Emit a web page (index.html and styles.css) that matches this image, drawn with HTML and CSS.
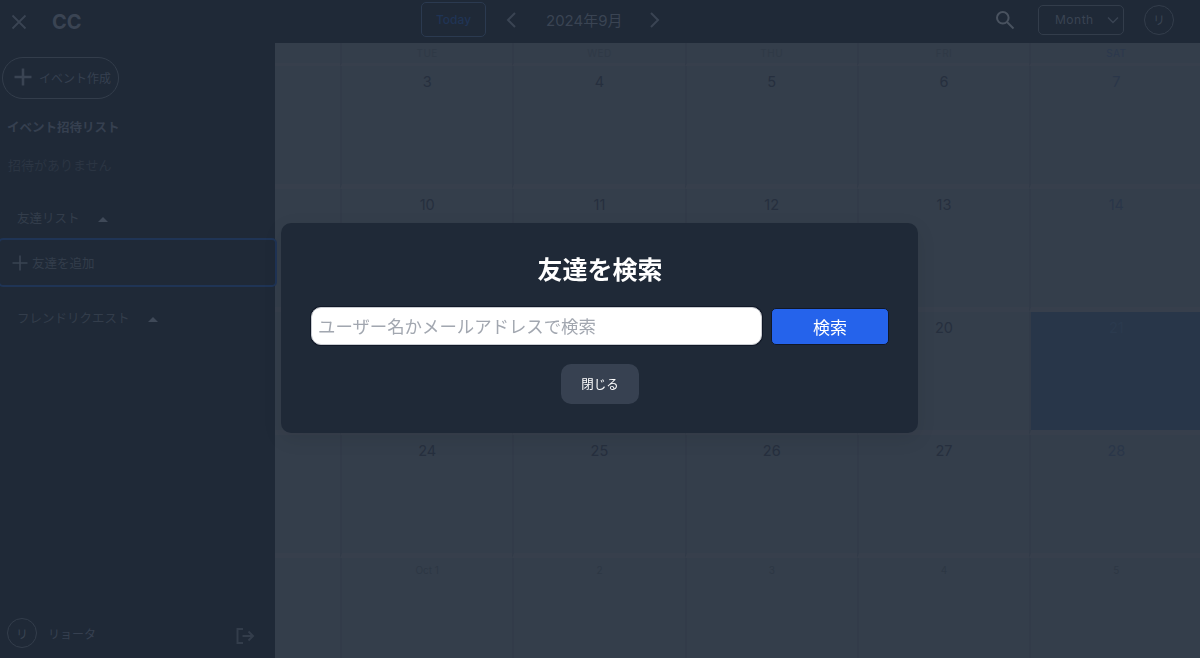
FILE: index.html
```html
<!DOCTYPE html>
<html lang="ja">
<head>
    <meta charset="UTF-8">
    <meta name="viewport" content="width=device-width, initial-scale=1.0">
    <title>CC</title>
    <link rel="stylesheet" href="styles.css">
</head>
<body>
    <div class="app">
        <aside class="sidebar">
            <div class="brand">
                <svg class="close-icon" width="18" height="18" viewBox="0 0 18 18"><path d="M2.5 2.5l13 13M15.5 2.5l-13 13"/></svg>
                <span class="brand-name">CC</span>
            </div>
            <button class="create-btn">
                <svg width="18" height="18" viewBox="0 0 18 18"><path d="M9 .5v17M.5 9h17"/></svg>
                <span>イベント作成</span>
            </button>
            <h2 class="invite-title">イベント招待リスト</h2>
            <p class="invite-empty">招待がありません</p>
            <div class="section-head friends-head">友達リスト<span class="caret"></span></div>
            <button class="add-friend">
                <svg width="16" height="16" viewBox="0 0 16 16"><path d="M8 .5v15M.5 8h15"/></svg>
                <span>友達を追加</span>
            </button>
            <div class="section-head requests-head">フレンドリクエスト<span class="caret"></span></div>
            <div class="user-row">
                <span class="avatar">リ</span>
                <span class="user-name">リョータ</span>
                <svg class="logout-icon" width="20" height="18" viewBox="0 0 20 18"><path d="M8 2H2.500v14H8M7.500 9H18M13.500 4.500L18 9l-4.500 4.500"/></svg>
            </div>
        </aside>

        <main class="main">
            <header class="topbar">
                <button class="today-btn">Today</button>
                <svg class="chevron" width="12" height="18" viewBox="0 0 12 18"><path d="M10 2L3 9l7 7"/></svg>
                <span class="month-title">2024年9月</span>
                <svg class="chevron" width="12" height="18" viewBox="0 0 12 18"><path d="M2 2l7 7-7 7"/></svg>
                <svg class="search-icon" width="20" height="20" viewBox="0 0 20 20"><circle cx="7.800" cy="7.800" r="5.800"/><path d="M12 12l6.500 6.500"/></svg>
                <div class="view-select">
                    <span>Month</span>
                    <svg width="12" height="8" viewBox="0 0 12 8"><path d="M1 1.500l5 5 5-5"/></svg>
                </div>
                <span class="avatar">リ</span>
            </header>

            <section class="calendar">
                <div class="week-head">
                    <div class="head-cell"></div>
                    <div class="head-cell">TUE</div>
                    <div class="head-cell">WED</div>
                    <div class="head-cell">THU</div>
                    <div class="head-cell">FRI</div>
                    <div class="head-cell sat">SAT</div>
                </div>
                <div class="week">
                    <div class="day"></div>
                    <div class="day">3</div>
                    <div class="day">4</div>
                    <div class="day">5</div>
                    <div class="day">6</div>
                    <div class="day sat">7</div>
                </div>
                <div class="week">
                    <div class="day"></div>
                    <div class="day">10</div>
                    <div class="day">11</div>
                    <div class="day">12</div>
                    <div class="day">13</div>
                    <div class="day sat">14</div>
                </div>
                <div class="week">
                    <div class="day"></div>
                    <div class="day">17</div>
                    <div class="day">18</div>
                    <div class="day">19</div>
                    <div class="day">20</div>
                    <div class="day sat today">21</div>
                </div>
                <div class="week">
                    <div class="day"></div>
                    <div class="day">24</div>
                    <div class="day">25</div>
                    <div class="day">26</div>
                    <div class="day">27</div>
                    <div class="day sat">28</div>
                </div>
                <div class="week">
                    <div class="day"></div>
                    <div class="day other">Oct 1</div>
                    <div class="day other">2</div>
                    <div class="day other">3</div>
                    <div class="day other">4</div>
                    <div class="day other">5</div>
                </div>
            </section>
        </main>
    </div>

    <div class="overlay">
        <div class="modal">
            <h1 class="modal-title">友達を検索</h1>
            <div class="search-row">
                <input class="search-input" type="text" placeholder="ユーザー名かメールアドレスで検索">
                <button class="search-btn">検索</button>
            </div>
            <button class="close-btn">閉じる</button>
        </div>
    </div>
</body>
</html>
```

FILE: styles.css
```css
* {
    box-sizing: border-box;
    font-family: Inter, "Noto Sans CJK JP", sans-serif;
}
body {
    margin: 0;
    height: 658px;
    overflow: hidden;
    background-color: #1f2937;
}
button {
    cursor: pointer;
}
svg {
    fill: none;
    flex-shrink: 0;
}
.app {
    display: flex;
    height: 658px;
}

/* sidebar */
.sidebar {
    width: 275px;
    flex-shrink: 0;
    display: flex;
    flex-direction: column;
    background-color: #1f2937;
    position: relative;
    z-index: 1;
}
.brand {
    display: flex;
    align-items: center;
    height: 43px;
    padding-left: 10px;
}
.close-icon path {
    stroke: #3a4453;
    stroke-width: 1.800;
}
.brand-name {
    margin-left: 24px;
    font-size: 20px;
    font-weight: 700;
    color: #3a4453;
}
.create-btn {
    display: flex;
    align-items: center;
    gap: 7px;
    width: 117px;
    height: 42px;
    margin: 14px 0 0 2px;
    padding: 0 0 2px 11px;
    background: none;
    border: 1px solid #333d4b;
    border-radius: 21px;
    font-size: 12px;
    color: #364050;
}
.create-btn path {
    stroke: #3a4453;
    stroke-width: 2.600;
}
.invite-title {
    margin: 20px 0 0 7px;
    font-size: 12.500px;
    line-height: 18px;
    font-weight: 700;
    color: #364050;
}
.invite-empty {
    margin: 19px 0 0 8px;
    font-size: 13px;
    line-height: 18px;
    color: #2b3543;
}
.section-head {
    display: flex;
    align-items: center;
    margin-left: 17px;
    font-size: 12.500px;
    line-height: 18px;
    color: #333d4b;
}
.friends-head {
    margin-top: 36px;
}
.requests-head {
    margin-top: 23px;
}
.caret {
    width: 0;
    height: 0;
    margin-left: 18px;
    border-left: 5px solid transparent;
    border-right: 5px solid transparent;
    border-bottom: 5px solid #3f4958;
}
.add-friend {
    display: flex;
    align-items: center;
    gap: 4px;
    height: 49px;
    margin: 10px -2px 0 -2px;
    padding: 0 0 0 12px;
    background: none;
    border: 2px solid #1f3455;
    border-radius: 5px;
    font-size: 12.500px;
    color: #333d4b;
}
.add-friend path {
    stroke: #3a4453;
    stroke-width: 1.600;
}
.avatar {
    display: flex;
    align-items: center;
    justify-content: center;
    width: 30px;
    height: 30px;
    flex-shrink: 0;
    border: 1px solid #333d4b;
    border-radius: 50%;
    font-size: 12px;
    color: #3a4453;
}
.user-row {
    display: flex;
    align-items: center;
    margin-top: auto;
    padding: 0 20px 10px 7px;
}
.user-name {
    margin-left: 11px;
    font-size: 12px;
    color: #364050;
}
.logout-icon {
    margin: 5px 0 0 auto;
}
.logout-icon path {
    stroke: #333d4b;
    stroke-width: 2;
}

/* top bar */
.main {
    flex: 1;
    min-width: 0;
    display: flex;
    flex-direction: column;
}
.topbar {
    display: flex;
    align-items: center;
    flex-shrink: 0;
    height: 43px;
    padding-left: 146px;
    background-color: #1f2937;
}
.today-btn {
    width: 65px;
    height: 35px;
    margin-top: -4px;
    background: none;
    border: 1px solid #2b3a50;
    border-radius: 5px;
    font-size: 12px;
    font-weight: 500;
    color: #1f3455;
}
.chevron {
    margin-top: -4px;
}
.chevron path {
    stroke: #3a4453;
    stroke-width: 2;
}
.today-btn + .chevron {
    margin-left: 19px;
}
.month-title {
    width: 77px;
    margin: -4px 26px 0 29px;
    font-size: 15px;
    white-space: nowrap;
    color: #3a4453;
}
.search-icon {
    margin: -4px 0 0 334px;
}
.search-icon circle,
.search-icon path {
    stroke: #49525f;
    stroke-width: 2;
}
.view-select {
    display: flex;
    align-items: center;
    justify-content: space-between;
    width: 86px;
    height: 30px;
    margin: -4px 0 0 23px;
    padding: 0 4px 0 16px;
    border: 1px solid #333d4b;
    border-radius: 5px;
    font-size: 12px;
    letter-spacing: .5px;
    color: #3a4453;
}
.view-select path {
    stroke: #3a4453;
    stroke-width: 1.400;
}
.topbar .avatar {
    margin: -4px 0 0 20px;
}

/* calendar */
.calendar {
    flex: 1;
    min-height: 0;
    overflow: hidden;
    background-color: #343e4b;
}
.week-head,
.week {
    display: grid;
    grid-template-columns: 65px repeat(5, 172.300px);
}
.week {
    height: 123px;
}
.head-cell {
    height: 23px;
    border-left: 2px solid #323b49;
    border-bottom: 3px solid #373f4c;
    font-size: 10px;
    line-height: 20px;
    letter-spacing: .5px;
    text-align: center;
    color: #2f3946;
}
.head-cell:first-child,
.day:first-child {
    border-left: 0;
}
.head-cell.sat {
    color: #2b384d;
}
.day {
    padding-top: 7px;
    border-left: 2px solid #323b49;
    border-bottom: 5px solid #373f4c;
    font-size: 14.500px;
    line-height: 18px;
    text-align: center;
    color: #262f3e;
}
.day.sat {
    color: #2a3649;
}
.day.today {
    background-color: #283649;
    color: #2b3a4e;
}
.day.other {
    padding-top: 3px;
    font-size: 10px;
    color: #2d3744;
}

/* search modal */
.overlay {
    position: fixed;
    inset: 0;
    z-index: 2;
    display: flex;
    align-items: center;
    justify-content: center;
}
.modal {
    width: 637px;
    height: 210px;
    margin: 0 1px 2px 0;
    padding: 30px 29px 0 30px;
    display: flex;
    flex-direction: column;
    align-items: center;
    background-color: #1f2937;
    border-radius: 10px;
    box-shadow: 0 6px 20px rgba(0,0,0,0.08);
}
.modal-title {
    margin: 0;
    font-size: 25px;
    line-height: 34px;
    font-weight: 700;
    color: #fff;
}
.search-row {
    display: flex;
    align-items: center;
    gap: 9px;
    width: 100%;
    margin-top: 20px;
}
.search-input {
    flex: 1;
    min-width: 0;
    height: 38px;
    padding: 0 6px;
    background-color: #fff;
    border: 1px solid #c9ccd1;
    border-radius: 10px;
    box-shadow: 0 0 0 1px #111827;
    font-size: 17.400px;
    color: #111827;
}
.search-input::placeholder {
    color: #a2a7b0;
}
.search-btn {
    width: 118px;
    height: 37px;
    background-color: #2563eb;
    border: 1px solid #111827;
    border-radius: 5px;
    font-size: 17px;
    color: #fff;
}
.close-btn {
    width: 78px;
    height: 40px;
    margin-top: 19px;
    padding: 0 0 2px;
    background-color: #374151;
    border: none;
    border-radius: 10px;
    font-size: 12.500px;
    color: #fff;
}
```
